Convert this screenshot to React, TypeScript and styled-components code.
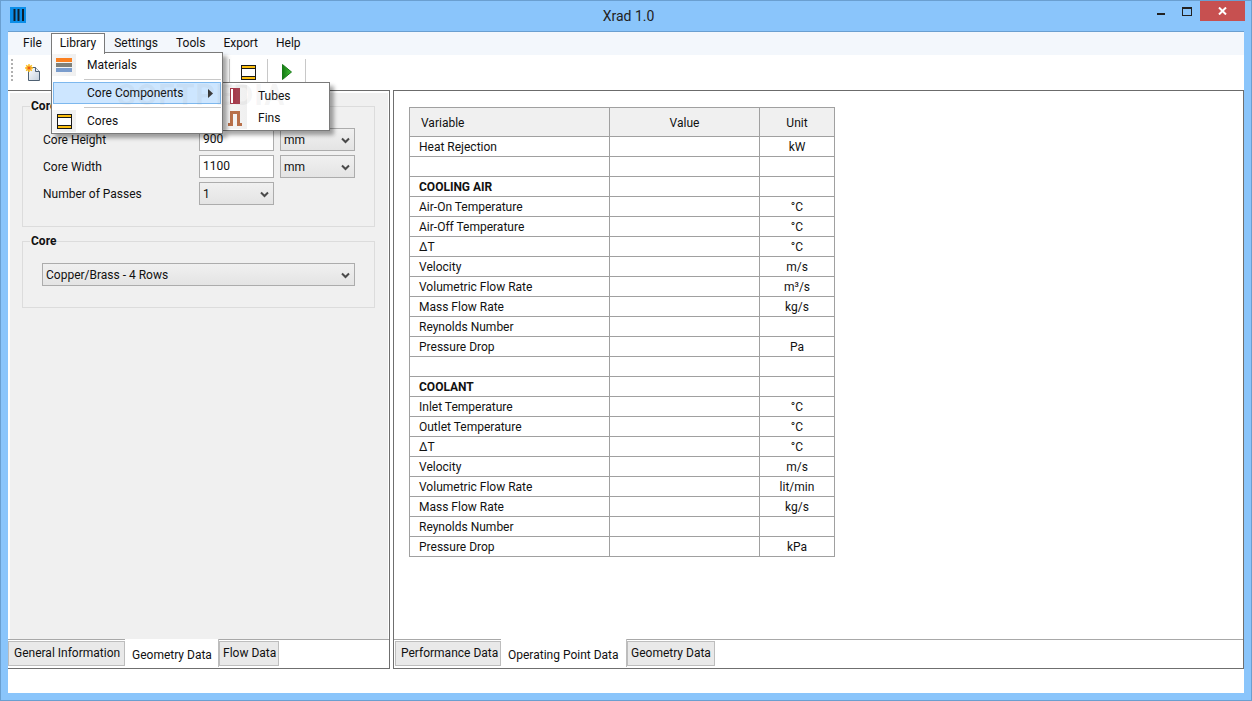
import React from 'react';
import styled, { createGlobalStyle } from 'styled-components';

const GlobalStyle = createGlobalStyle`
  html, body { margin: 0; padding: 0; }
  body { width: 1252px; height: 701px; overflow: hidden; font-family: Roboto, "Noto Sans", sans-serif; font-size: 12px; color: #111; }
  * { box-sizing: border-box; }
`;

const Window = styled.div`
  position: relative;
  width: 1252px;
  height: 701px;
  display: flex;
  flex-direction: column;
  background: #8ac5fb;
  border: 1px solid #6a9fd0;
  padding: 0 7px 7px;
`;

const TitleBar = styled.div`
  position: relative;
  height: 30px;
  flex: none;
  display: flex;
  align-items: center;
  justify-content: center;
  font-size: 14px;
  color: #222;
  padding-bottom: 1px;
  padding-left: 5px;
`;

const AppIcon = styled.svg`
  position: absolute;
  left: 2px;
  top: 6px;
`;

const Controls = styled.div`
  position: absolute;
  right: -1px;
  top: 0;
  display: flex;
  align-items: flex-start;
`;

const ControlButton = styled.div<{ $close?: boolean }>`
  width: ${(p) => (p.$close ? '45px' : '26px')};
  height: 20px;
  display: flex;
  align-items: center;
  justify-content: center;
  background: ${(p) => (p.$close ? '#c75050' : 'transparent')};
`;

const Client = styled.div`
  flex: 1;
  display: flex;
  flex-direction: column;
  background: #fff;
  border-top: 1px solid #6a9fd0;
  min-height: 0;
`;

const MenuBar = styled.div`
  height: 23px;
  flex: none;
  display: flex;
  align-items: flex-start;
  background: #f3f7fc;
  padding-left: 6px;
`;

const MenuItem = styled.div<{ $open?: boolean }>`
  position: relative;
  height: 21px;
  padding: 0 8px;
  margin-top: 1px;
  line-height: 19px;
  border: 1px solid ${(p) => (p.$open ? '#7a7a7a' : 'transparent')};
  border-bottom: none;
  background: ${(p) => (p.$open ? '#fff' : 'transparent')};
  z-index: 3;
`;

const Toolbar = styled.div`
  position: relative;
  height: 35px;
  flex: none;
  display: flex;
  align-items: flex-start;
  background: #fff;
  padding: 4px 0 0 3px;
`;

const Grip = styled.div`
  width: 2px;
  height: 22px;
  margin-right: 12px;
  background-image: linear-gradient(#b0b0b0 50%, transparent 50%);
  background-size: 2px 4px;
`;

const ToolButton = styled.div<{ $width: number; $left?: boolean }>`
  width: ${(p) => p.$width}px;
  height: 29px;
  padding-bottom: 3px;
  display: flex;
  align-items: center;
  justify-content: ${(p) => (p.$left ? 'flex-start' : 'center')};
  border-right: 1px solid #c8c8c8;
`;

const Panels = styled.div`
  flex: 1;
  display: flex;
  gap: 3px;
  min-height: 0;
`;

const Panel = styled.section<{ $left?: boolean }>`
  width: ${(p) => (p.$left ? '382px' : '851px')};
  display: flex;
  flex-direction: column;
  border-top: 1px solid #6b6b6b;
  border-bottom: 1px solid #6f6f6f;
  border-right: 1px solid #6f6f6f;
  border-left: ${(p) => (p.$left ? 'none' : '1px solid #6f6f6f')};
`;

const LeftBody = styled.div`
  flex: 1;
  margin: 2px 1px 0 2px;
  background: #f0f0f0;
  padding: 13px 13px 0 12px;
  display: flex;
  flex-direction: column;
  gap: 14px;
`;

const RightBody = styled.div`
  flex: 1;
  padding: 16px 0 0 15px;
`;

const Group = styled.div<{ $height: number }>`
  height: ${(p) => p.$height}px;
  border: 1px solid #dcdcdc;
  position: relative;
`;

const GroupTitle = styled.div`
  position: absolute;
  left: 7px;
  top: -9px;
  padding: 0 1px;
  background: #f0f0f0;
  font-weight: 700;
  line-height: 16px;
`;

const FormGrid = styled.div`
  display: grid;
  grid-template-columns: 150px 75px 75px;
  column-gap: 6px;
  row-gap: 4px;
  padding: 21px 0 0 20px;
  align-items: center;
`;

const Label = styled.div`
  line-height: 16px;
`;

const TextField = styled.div`
  height: 23px;
  background: #fff;
  border: 1px solid #acacac;
  padding: 0 3px;
  line-height: 21px;
`;

const Select = styled.div<{ $wide?: boolean }>`
  position: relative;
  height: 23px;
  ${(p) => (p.$wide ? 'width: 313px; margin: 21px 0 0 19px;' : '')}
  background: linear-gradient(#f0f0f0, #e4e4e4);
  border: 1px solid #acacac;
  padding: 0 3px;
  line-height: 22px;
`;

const Chevron = styled.svg`
  position: absolute;
  right: 4px;
  top: 8px;
`;

const TabStrip = styled.div<{ $inset?: boolean }>`
  height: 29px;
  flex: none;
  display: flex;
  align-items: flex-start;
  background: #fff;
  border-top: 1px solid #a8a8a8;
  padding-left: ${(p) => (p.$inset ? '1px' : '0')};
`;

const Tab = styled.div<{ $width: number; $active?: boolean; $pad?: number }>`
  flex: none;
  width: ${(p) => p.$width}px;
  height: ${(p) => (p.$active ? '28px' : '25px')};
  margin-top: ${(p) => (p.$active ? '-1px' : '1px')};
  padding: ${(p) => (p.$active ? '6px 0 0 7px' : `1px 0 0 ${p.$pad ?? 5}px`)};
  line-height: 20px;
  white-space: nowrap;
  background: ${(p) => (p.$active ? '#fff' : '#e9e9e9')};
  border-style: solid;
  border-color: #bdbdbd;
  border-width: ${(p) => (p.$active ? '0 1px 0 0' : '1px')};
`;

const StatusBar = styled.div`
  height: 24px;
  flex: none;
  background: #fff;
`;

const DataTable = styled.table`
  border-collapse: collapse;
  table-layout: fixed;
  width: 426px;
`;

const HeadCell = styled.th<{ $left?: boolean }>`
  height: 29px;
  padding: 1px 0 0 ${(p) => (p.$left ? '11px' : '0')};
  background: #f0f0f0;
  border: 1px solid #a0a0a0;
  font-weight: 400;
  text-align: ${(p) => (p.$left ? 'left' : 'center')};
`;

const Cell = styled.td<{ $center?: boolean; $bold?: boolean }>`
  height: 20px;
  padding: 0 0 0 ${(p) => (p.$center ? '0' : '9px')};
  border: 1px solid #a0a0a0;
  line-height: 16px;
  text-align: ${(p) => (p.$center ? 'center' : 'left')};
  font-weight: ${(p) => (p.$bold ? 700 : 400)};
`;

const Popup = styled.div`
  position: absolute;
  background: #fff;
  border: 1px solid #7a7a7a;
  box-shadow: 4px 4px 4px rgba(0, 0, 0, 0.35);
  display: flex;
  flex-direction: column;
  z-index: 2;
`;

const LibraryMenu = styled(Popup)`
  left: 50px;
  top: 51px;
  width: 172px;
  height: 82px;
  padding: 1px;
`;

const ComponentsMenu = styled(Popup)`
  left: 221px;
  top: 81px;
  width: 108px;
  height: 49px;
  padding: 2px 1px 1px 0;
  z-index: 1;
`;

const PopupRow = styled.div<{ $active?: boolean; $gutter: number }>`
  position: relative;
  height: 22px;
  flex: none;
  display: flex;
  align-items: center;
  border: 1px solid ${(p) => (p.$active ? '#7db8ee' : 'transparent')};
  background: ${(p) => (p.$active ? '#cde6ff' : 'transparent')};
  padding-left: ${(p) => p.$gutter}px;
`;

const PopupIcon = styled.div<{ $left: number }>`
  position: absolute;
  left: ${(p) => p.$left}px;
  top: -1px;
  bottom: -1px;
  width: 24px;
  display: flex;
  align-items: center;
  justify-content: center;
  background: linear-gradient(90deg, #f6f6f6, #f0f0f0);
`;

const PopupSeparator = styled.div`
  height: 1px;
  margin: 3px 0 2px 31px;
  flex: none;
  background: #c8c8c8;
`;

const SubArrow = styled.svg`
  position: absolute;
  right: 7px;
  top: 6px;
`;

const Watermark = styled.div`
  position: absolute;
  left: 116px;
  top: 76px;
  font-size: 30px;
  font-weight: 700;
  letter-spacing: 1px;
  color: rgba(150, 150, 150, 0.1);
  pointer-events: none;
  z-index: 4;
`;

const CoreIcon = () => (
  <svg width="15" height="15" viewBox="0 0 15 15">
    <rect width="15" height="15" fill="#1a1a1a" />
    <rect x="1" y="1" width="13" height="2" fill="#fdc010" />
    <rect x="1" y="4" width="13" height="7" fill="#fff" />
    <rect x="1" y="12" width="13" height="2" fill="#fdc010" />
  </svg>
);

type Row = [string, string, boolean?];

const rows: Row[] = [
  ['Heat Rejection', 'kW'],
  ['', ''],
  ['COOLING AIR', '', true],
  ['Air-On Temperature', '°C'],
  ['Air-Off Temperature', '°C'],
  ['ΔT', '°C'],
  ['Velocity', 'm/s'],
  ['Volumetric Flow Rate', 'm³/s'],
  ['Mass Flow Rate', 'kg/s'],
  ['Reynolds Number', ''],
  ['Pressure Drop', 'Pa'],
  ['', ''],
  ['COOLANT', '', true],
  ['Inlet Temperature', '°C'],
  ['Outlet Temperature', '°C'],
  ['ΔT', '°C'],
  ['Velocity', 'm/s'],
  ['Volumetric Flow Rate', 'lit/min'],
  ['Mass Flow Rate', 'kg/s'],
  ['Reynolds Number', ''],
  ['Pressure Drop', 'kPa'],
];

const ChevronIcon = () => (
  <Chevron width="9" height="7" viewBox="0 0 9 7">
    <path d="M1 1.5 L4.5 5 L8 1.5" fill="none" stroke="#4a4a4a" strokeWidth="2" />
  </Chevron>
);

export default function App() {
  return (
    <>
      <GlobalStyle />
      <Window>
        <TitleBar>
          <AppIcon width="16" height="16" viewBox="0 0 16 16">
            <rect width="16" height="16" fill="#0a8ee8" />
            <rect x="3.5" y="2" width="2" height="12" fill="#10202e" />
            <rect x="7.5" y="2" width="2" height="12" fill="#10202e" />
            <rect x="12" y="2" width="2" height="12" fill="#10202e" />
          </AppIcon>
          Xrad 1.0
          <Controls>
            <ControlButton>
              <svg width="10" height="12" viewBox="0 0 10 12">
                <rect x="1" y="8" width="8" height="2" fill="#222" />
              </svg>
            </ControlButton>
            <ControlButton>
              <svg width="10" height="9" viewBox="0 0 10 9">
                <rect x="0.5" y="0.5" width="9" height="8" fill="none" stroke="#222" />
                <rect x="0" y="0" width="10" height="2" fill="#222" />
              </svg>
            </ControlButton>
            <ControlButton $close>
              <svg width="9" height="8" viewBox="0 0 9 8">
                <path d="M1 0.5 L8 7.5 M8 0.5 L1 7.5" stroke="#fff" strokeWidth="2" />
              </svg>
            </ControlButton>
          </Controls>
        </TitleBar>
        <Client>
          <MenuBar>
            <MenuItem>File</MenuItem>
            <MenuItem $open>Library</MenuItem>
            <MenuItem>Settings</MenuItem>
            <MenuItem>Tools</MenuItem>
            <MenuItem>Export</MenuItem>
            <MenuItem>Help</MenuItem>
          </MenuBar>
          <Toolbar>
            <Grip />
            <ToolButton $width={205} $left>
              <svg width="15" height="17" viewBox="0 0 15 17">
                <defs>
                  <linearGradient id="pageFill" x1="0" y1="0" x2="1" y2="1">
                    <stop offset="0" stopColor="#ffffff" />
                    <stop offset="1" stopColor="#c4d0dc" />
                  </linearGradient>
                </defs>
                <path d="M3.5 3.5 H10.5 L14.5 7.5 V16.5 H3.5 Z" fill="url(#pageFill)" stroke="#4e6072" />
                <path d="M10.5 3.5 V7.5 H14.5" fill="#e8eef4" stroke="#4e6072" />
                <path d="M4 0 V8 M0 4 H8 M1.2 1.2 L6.8 6.8 M6.8 1.2 L1.2 6.8" stroke="#fbc21c" strokeWidth="1.4" />
                <circle cx="4" cy="4" r="2.6" fill="#f9a825" />
                <circle cx="4" cy="4" r="1.3" fill="#ee5a1a" />
              </svg>
            </ToolButton>
            <ToolButton $width={38}>
              <CoreIcon />
            </ToolButton>
            <ToolButton $width={38}>
              <svg width="10" height="16" viewBox="0 0 10 16">
                <defs>
                  <linearGradient id="playFill" x1="0" y1="0" x2="1" y2="0">
                    <stop offset="0" stopColor="#137a13" />
                    <stop offset="1" stopColor="#46c03a" />
                  </linearGradient>
                </defs>
                <path d="M0.5 0.5 L9.5 8 L0.5 15.5 Z" fill="url(#playFill)" stroke="#187a18" />
              </svg>
            </ToolButton>
          </Toolbar>
          <Panels>
            <Panel $left>
              <LeftBody>
                <Group $height={121}>
                  <GroupTitle>Core</GroupTitle>
                  <FormGrid>
                    <Label>Core Height</Label>
                    <TextField>900</TextField>
                    <Select>mm<ChevronIcon /></Select>
                    <Label>Core Width</Label>
                    <TextField>1100</TextField>
                    <Select>mm<ChevronIcon /></Select>
                    <Label>Number of Passes</Label>
                    <Select>1<ChevronIcon /></Select>
                  </FormGrid>
                </Group>
                <Group $height={67}>
                  <GroupTitle>Core</GroupTitle>
                  <Select $wide>Copper/Brass - 4 Rows<ChevronIcon /></Select>
                </Group>
              </LeftBody>
              <TabStrip>
                <Tab $width={117}>General Information</Tab>
                <Tab $width={94} $active>Geometry Data</Tab>
                <Tab $width={60} $pad={3}>Flow Data</Tab>
              </TabStrip>
            </Panel>
            <Panel>
              <RightBody>
                <DataTable>
                  <colgroup>
                    <col width="200" />
                    <col width="150" />
                    <col width="75" />
                  </colgroup>
                  <thead>
                    <tr>
                      <HeadCell $left>Variable</HeadCell>
                      <HeadCell>Value</HeadCell>
                      <HeadCell>Unit</HeadCell>
                    </tr>
                  </thead>
                  <tbody>
                    {rows.map(([name, unit, bold], i) => (
                      <tr key={i}>
                        <Cell $bold={bold}>{name}</Cell>
                        <Cell />
                        <Cell $center>{unit}</Cell>
                      </tr>
                    ))}
                  </tbody>
                </DataTable>
              </RightBody>
              <TabStrip $inset>
                <Tab $width={106}>Performance Data</Tab>
                <Tab $width={126} $active>Operating Point Data</Tab>
                <Tab $width={88} $pad={3}>Geometry Data</Tab>
              </TabStrip>
            </Panel>
          </Panels>
          <StatusBar />
        </Client>
        <LibraryMenu>
          <PopupRow $gutter={33}>
            <PopupIcon $left={-2}>
              <svg width="16" height="14" viewBox="0 0 16 14">
                <rect y="0" width="16" height="4" fill="#fb8020" />
                <rect y="5" width="16" height="4" fill="#808078" />
                <rect y="10" width="16" height="4" fill="#7a9ccc" />
              </svg>
            </PopupIcon>
            Materials
          </PopupRow>
          <PopupSeparator />
          <PopupRow $gutter={33} $active>
            Core Components
            <SubArrow width="5" height="9" viewBox="0 0 5 9">
              <path d="M0 0 L5 4.5 L0 9 Z" fill="#333" />
            </SubArrow>
          </PopupRow>
          <PopupSeparator />
          <PopupRow $gutter={33}>
            <PopupIcon $left={-2}>
              <CoreIcon />
            </PopupIcon>
            Cores
          </PopupRow>
        </LibraryMenu>
        <ComponentsMenu>
          <PopupRow $gutter={34}>
            <PopupIcon $left={-1}>
              <svg width="10" height="16" viewBox="0 0 10 16">
                <rect width="10" height="16" fill="#a63a4a" />
                <rect x="1" y="1" width="2" height="14" fill="#fff" />
              </svg>
            </PopupIcon>
            Tubes
          </PopupRow>
          <PopupRow $gutter={34}>
            <PopupIcon $left={-1}>
              <svg width="14" height="15" viewBox="0 0 14 15">
                <path d="M0 13.5 H3.5 V1.5 H10.5 V13.5 H14" fill="none" stroke="#b8704a" strokeWidth="3" />
              </svg>
            </PopupIcon>
            Fins
          </PopupRow>
        </ComponentsMenu>
        <Watermark>SOFTPEDIA</Watermark>
      </Window>
    </>
  );
}
